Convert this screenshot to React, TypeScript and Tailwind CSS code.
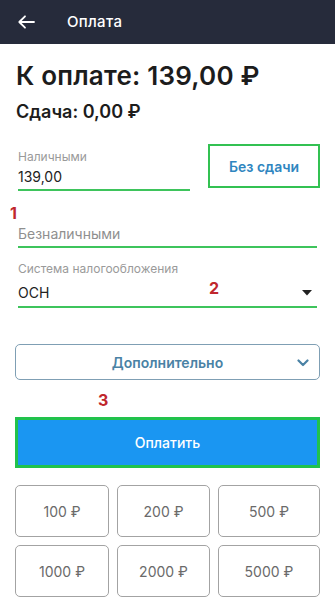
import React from "react";

const F = { fontFamily: "Inter, 'Noto Sans', sans-serif" };

export default function App() {
  const amounts = ["100 ₽", "200 ₽", "500 ₽", "1000 ₽", "2000 ₽", "5000 ₽"];
  return (
    <div className="w-[335px] h-[599px] bg-white overflow-hidden relative" style={F}>
      <div className="h-[44px] bg-[#262b3b] flex items-center pl-[18px]">
        <svg width="17" height="14" viewBox="0 0 17 14" fill="none" stroke="white" strokeWidth="1.8" strokeLinecap="round" strokeLinejoin="round">
          <path d="M16 7H1.5M7 1.3L1.3 7 7 12.7" />
        </svg>
        <span className="ml-[32px] text-white text-[15px] font-medium tracking-[0.3px]">Оплата</span>
      </div>

      <div className="px-[15px] relative">
        <div className="pt-[16px] pl-[1px] text-[26px] leading-[32px] font-semibold text-[#1c1c1c] tracking-[0.2px]">К оплате: 139,00 ₽</div>
        <div className="mt-[8px] pl-[1px] text-[18px] leading-[24px] font-semibold text-[#1c1c1c]">Сдача: 0,00 ₽</div>

        <div className="mt-[20px] flex items-start">
          <div className="ml-[3px] w-[172px] pt-[5px]">
            <div className="text-[12px] leading-[16px] text-[#9a9a9a]">Наличными</div>
            <div className="mt-[3px] text-[14px] leading-[18px] text-[#222]">139,00</div>
            <div className="mt-[3px] h-[2px] bg-[#3ec45c]" />
          </div>
          <div className="ml-auto w-[112px] h-[44px] border-2 border-[#33c152] flex items-center justify-center text-[14px] font-semibold text-[#2f86c0]">
            Без сдачи
          </div>
        </div>

        <div className="mx-[3px] mt-[34px]">
          <div className="text-[14px] leading-[18px] text-[#8f8f8f]">Безналичными</div>
          <div className="mt-[3px] h-[2px] bg-[#3ec45c]" />
        </div>

        <div className="mx-[3px] mt-[13px]">
          <div className="text-[12px] leading-[16px] text-[#9a9a9a]">Система налогообложения</div>
          <div className="mt-[7px] flex items-center justify-between">
            <span className="text-[14px] leading-[18px] text-[#222]">ОСН</span>
            <svg width="10" height="6" viewBox="0 0 10 6" className="mr-[5px]">
              <path d="M0 0h10L5 5.5z" fill="#222" />
            </svg>
          </div>
          <div className="mt-[4px] h-[2px] bg-[#3ec45c]" />
        </div>

        <div className="mt-[36px] h-[36px] rounded-[5px] border border-[#7f9fb4] flex items-center justify-center relative">
          <span className="text-[14px] font-semibold text-[#4a82a5]">Дополнительно</span>
          <svg width="12" height="8" viewBox="0 0 12 8" fill="none" stroke="#4a82a5" strokeWidth="2.2" strokeLinecap="round" strokeLinejoin="round" className="absolute right-[10px] top-[14px]">
            <path d="M1.5 1.5L6 6l4.5-4.5" />
          </svg>
        </div>

        <div className="mt-[37px] h-[51px] border-[3px] border-[#21c24c] bg-[#1a96f2] flex items-center justify-center">
          <span className="text-white text-[14px] font-medium">Оплатить</span>
        </div>

        <div className="mt-[17px] grid grid-cols-[94px_93px_1fr] gap-x-[8px] gap-y-[8px]">
          {amounts.map((a) => (
            <div key={a} className="h-[52px] rounded-[5px] border border-[#a3a3a3] flex items-center justify-center text-[14px] text-[#6a6a6a]">
              {a}
            </div>
          ))}
        </div>

        <span className="absolute left-[10px] top-[157px] text-[16px] font-bold text-[#c0272d]">1</span>
        <span className="absolute left-[209px] top-[232px] text-[16px] font-bold text-[#c0272d]">2</span>
        <span className="absolute left-[98px] top-[344px] text-[16px] font-bold text-[#c0272d]">3</span>
      </div>
    </div>
  );
}
